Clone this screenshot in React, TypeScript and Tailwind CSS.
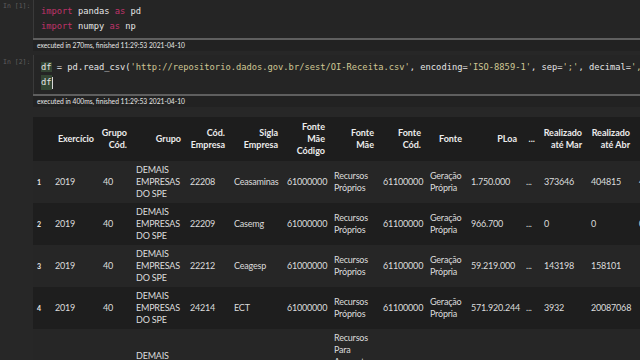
const mono = "font-['DejaVu_Sans_Mono',monospace]";

type Row = { idx: string; cells: string[] };

const headers = [
  "",
  "Exercício",
  "Grupo\nCód.",
  "Grupo",
  "Cód.\nEmpresa",
  "Sigla\nEmpresa",
  "Fonte\nMãe\nCódigo",
  "Fonte\nMãe",
  "Fonte\nCód.",
  "Fonte",
  "PLoa",
  "...",
  "Realizado\naté Mar",
  "Realizado\naté Abr",
  "Realizado\naté Mai",
];

const widths = [
  "w-[17px]",
  "w-[48px]",
  "w-[33px]",
  "w-[54px]",
  "w-[44px]",
  "w-[53px]",
  "w-[47px]",
  "w-[49px]",
  "w-[47px]",
  "w-[41px]",
  "w-[55px]",
  "w-[18px]",
  "w-[47px]",
  "w-[48px]",
  "w-[60px]",
];

const rows: Row[] = [
  { idx: "1", cells: ["2019", "40", "DEMAIS\nEMPRESAS\nDO SPE", "22208", "Ceasaminas", "61000000", "Recursos\nPróprios", "61100000", "Geração\nPrópria", "1.750.000", "...", "373646", "404815", "456210"] },
  { idx: "2", cells: ["2019", "40", "DEMAIS\nEMPRESAS\nDO SPE", "22209", "Casemg", "61000000", "Recursos\nPróprios", "61100000", "Geração\nPrópria", "966.700", "...", "0", "0", "0"] },
  { idx: "3", cells: ["2019", "40", "DEMAIS\nEMPRESAS\nDO SPE", "22212", "Ceagesp", "61000000", "Recursos\nPróprios", "61100000", "Geração\nPrópria", "59.219.000", "...", "143198", "158101", ""] },
  { idx: "4", cells: ["2019", "40", "DEMAIS\nEMPRESAS\nDO SPE", "24214", "ECT", "61000000", "Recursos\nPróprios", "61100000", "Geração\nPrópria", "571.920.244", "...", "3932", "20087068", ""] },
  { idx: "5", cells: ["2019", "40", "DEMAIS\nEMPRESAS\nDO SPE", "24215", "Emgea", "61000000", "Recursos\nPara\nAumento\nde\nCapital\nTesouro", "61200000", "Tesouro", "0", "...", "0", "0", ""] },
];

function Lines({ text }: { text: string }) {
  const parts = text.split("\n");
  return (
    <>
      {parts.map((p, i) => (
        <span key={i}>
          {p}
          {i < parts.length - 1 && <br />}
        </span>
      ))}
    </>
  );
}

function Prompt({ n }: { n: number }) {
  return (
    <div className={`w-[33px] shrink-0 pl-[3px] pt-[3px] text-[6.5px] leading-[8px] text-[#5e5e5e] ${mono}`}>
      In [{n}]:
    </div>
  );
}

function Executed({ ms }: { ms: string }) {
  return (
    <div className="ml-[33px] h-[13px] border-t-2 border-[#5f5f5f] bg-[#222222] pl-[4px] text-[6.7px] leading-[11px] text-[#e6e6e6] font-['Lato',sans-serif]">
      executed in {ms}, finished 11:29:53 2021-04-10
    </div>
  );
}

const kw = "text-[#c0336a]";
const str = "text-[#cfc794]";
const hl = "bg-[#344634]";

export default function App() {
  return (
    <div className="w-[640px] h-[360px] overflow-hidden bg-[#272727] font-['Lato',sans-serif]">
      {/* cell 1 */}
      <div className="flex h-[39px] -mt-[1px]">
        <Prompt n={1} />
        <div className={`flex-1 border-l border-[#3a3a3a] bg-[#252525] pl-[7px] pt-[5px] text-[8.75px] leading-[15px] text-[#e4e4e4] whitespace-pre ${mono}`}>
          <div>
            <span className={kw}>import</span> pandas <span className={kw}>as</span> pd
          </div>
          <div>
            <span className={kw}>import</span> numpy <span className={kw}>as</span> np
          </div>
        </div>
      </div>
      <Executed ms="270ms" />

      {/* cell 2 */}
      <div className="flex h-[39px] mt-[4px]">
        <Prompt n={2} />
        <div className={`flex-1 border-l border-[#3a3a3a] bg-[#252525] pl-[7px] pt-[5px] text-[8.75px] leading-[15px] text-[#e4e4e4] whitespace-pre ${mono}`}>
          <div>
            <span className={hl}>df</span> = pd.read_csv(
            <span className={str}>'http://repositorio.dados.gov.br/sest/OI-Receita.csv'</span>, encoding=
            <span className={str}>'ISO-8859-1'</span>, sep=<span className={str}>';'</span>, decimal=<span className={str}>','</span>
          </div>
          <div className="flex items-center">
            <span className={hl}>df</span>
            <span className="inline-block w-[1px] h-[12px] bg-[#d8d8d8]" />
          </div>
        </div>
      </div>
      <Executed ms="400ms" />

      {/* output */}
      <div className="ml-[33px] mt-[10px] overflow-hidden">
        <table className="table-fixed border-collapse text-[9px] leading-[12px] text-[#dcdcdc] w-[661px]">
          <thead>
            <tr className="bg-[#1d1d1d]">
              {headers.map((h, i) => (
                <th
                  key={i}
                  className={`${widths[i]} py-[4px] pl-[3px] pr-[4px] text-right align-middle font-bold whitespace-nowrap text-[#ececec]`}
                >
                  <Lines text={h} />
                </th>
              ))}
            </tr>
          </thead>
          <tbody>
            {rows.map((r, ri) => (
              <tr key={ri} className={ri % 2 === 0 ? "bg-[#262626]" : "bg-[#1e1e1e]"}>
                <th className="py-[3px] pl-[4px] text-left align-middle text-[7px] font-bold text-[#e6e6e6]">{r.idx}</th>
                {r.cells.map((c, ci) => (
                  <td key={ci} className="py-[3px] pl-[5px] pr-[2px] text-left align-middle whitespace-nowrap overflow-hidden tracking-[-0.2px]">
                    <Lines text={c} />
                  </td>
                ))}
              </tr>
            ))}
          </tbody>
        </table>
      </div>
    </div>
  );
}
